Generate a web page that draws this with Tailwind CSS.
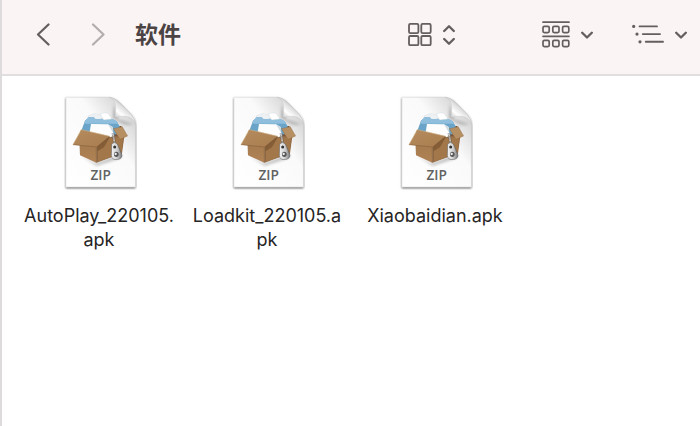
<!DOCTYPE html>
<html lang="zh-CN">
<head>
  <meta charset="UTF-8" />
  <meta name="viewport" content="width=device-width, initial-scale=1.0" />
  <title>软件</title>
  <script src="https://cdn.jsdelivr.net/npm/@tailwindcss/browser@4"></script>
</head>
<body class="bg-white font-['Inter','Noto_Sans_CJK_SC',sans-serif] text-[#262424]">

  <div class="min-h-screen border-l-2 border-[#dddbdc]">

    <header class="flex items-center h-[76px] pb-1 pl-[33px] pr-[13px] bg-[#faf4f4] border-b-2 border-[#e1dedf] text-[#655d5e]">
      <button type="button" aria-label="Back" class="mr-[38px]">
        <svg class="block w-4 h-6" viewBox="0 0 16 24" fill="none" stroke="currentColor" stroke-width="2.2" stroke-linecap="round" stroke-linejoin="round"><path d="M13.5 1.5 L3 11.5 L13.5 21.5" /></svg>
      </button>
      <button type="button" aria-label="Forward" class="mr-[30px] text-[#b3adae]">
        <svg class="block w-4 h-6" viewBox="0 0 16 24" fill="none" stroke="currentColor" stroke-width="2.2" stroke-linecap="round" stroke-linejoin="round"><path d="M4 1.5 L14.5 11.5 L4 21.5" /></svg>
      </button>
      <h1 class="text-[23px] leading-8 font-bold text-[#4b4344]">软件</h1>

      <div class="ml-auto flex items-center">
        <button type="button" aria-label="View as icons" class="flex items-center gap-[11px]">
          <svg class="w-6 h-6" viewBox="0 0 24 24" fill="none" stroke="currentColor" stroke-width="1.8">
            <rect x="1" y="0.9" width="9.4" height="9.2" rx="1.3" />
            <rect x="13.3" y="0.9" width="9.4" height="9.2" rx="1.3" />
            <rect x="1" y="13" width="9.4" height="9.2" rx="1.3" />
            <rect x="13.3" y="13" width="9.4" height="9.2" rx="1.3" />
          </svg>
          <svg class="w-3 h-6" viewBox="0 0 12 24" fill="none" stroke="currentColor" stroke-width="2.3" stroke-linecap="round" stroke-linejoin="round"><path d="M1.2 8 L6 3.2 L10.8 8 M1.2 16 L6 20.8 L10.8 16" /></svg>
        </button>
        <button type="button" aria-label="Group items" class="ml-[87px] flex items-center gap-[11px]">
          <svg class="w-7 h-7" viewBox="0 0 28 28" fill="none" stroke="currentColor" stroke-width="1.7" stroke-linecap="round">
            <path d="M1 1.2 H27 M1 15.3 H27" />
            <rect x="1" y="5.4" width="6.2" height="6.2" rx="1.3" />
            <rect x="10.8" y="5.4" width="6.2" height="6.2" rx="1.3" />
            <rect x="20.6" y="5.4" width="6.2" height="6.2" rx="1.3" />
            <rect x="1" y="19.4" width="6.2" height="6.2" rx="1.3" />
            <rect x="10.8" y="19.4" width="6.2" height="6.2" rx="1.3" />
            <rect x="20.6" y="19.4" width="6.2" height="6.2" rx="1.3" />
          </svg>
          <svg class="w-3 h-3" viewBox="0 0 12 12" fill="none" stroke="currentColor" stroke-width="2.3" stroke-linecap="round" stroke-linejoin="round"><path d="M1.2 3.7 L6 8.5 L10.8 3.7" /></svg>
        </button>
        <button type="button" aria-label="More options" class="ml-[39px] flex items-center gap-[11px]">
          <svg class="w-8 h-6" viewBox="0 0 32 24" fill="none" stroke="currentColor" stroke-width="1.9" stroke-linecap="round">
            <path d="M7.6 3.4 H25 M10.8 11.1 H28 M13.8 18.8 H31" />
            <g fill="currentColor" stroke="none">
              <circle cx="1.7" cy="3.4" r="1.6" />
              <circle cx="5" cy="11.1" r="1.6" />
              <circle cx="8" cy="18.8" r="1.6" />
            </g>
          </svg>
          <svg class="w-3 h-3" viewBox="0 0 12 12" fill="none" stroke="currentColor" stroke-width="2.3" stroke-linecap="round" stroke-linejoin="round"><path d="M1.2 3.7 L6 8.5 L10.8 3.7" /></svg>
        </button>
      </div>
    </header>

    <main class="flex flex-wrap gap-2 pl-[17px] pt-[18px]">
      <figure class="w-40 flex flex-col items-center">
        <svg class="w-[76px] h-[98px]" viewBox="19 28 228 294" role="img" aria-label="ZIP archive"><use href="#zip" /></svg>
        <figcaption class="mt-3 text-center text-[18px] leading-6 whitespace-nowrap">AutoPlay_220105.<br />apk</figcaption>
      </figure>
      <figure class="w-40 flex flex-col items-center">
        <svg class="w-[76px] h-[98px]" viewBox="19 28 228 294" role="img" aria-label="ZIP archive"><use href="#zip" /></svg>
        <figcaption class="mt-3 text-center text-[18px] leading-6 whitespace-nowrap">Loadkit_220105.a<br />pk</figcaption>
      </figure>
      <figure class="w-40 flex flex-col items-center">
        <svg class="w-[76px] h-[98px]" viewBox="19 28 228 294" role="img" aria-label="ZIP archive"><use href="#zip" /></svg>
        <figcaption class="mt-3 text-center text-[18px] leading-6 whitespace-nowrap">Xiaobaidian.apk</figcaption>
      </figure>
    </main>
  </div>

  <!-- shared archive icon -->
  <svg class="absolute w-0 h-0" aria-hidden="true">
    <defs>
      <linearGradient id="paper" x1="0" y1="1" x2="1" y2="0">
        <stop offset="0" stop-color="#ffffff" />
        <stop offset="0.6" stop-color="#fafafa" />
        <stop offset="0.82" stop-color="#dcdcdc" />
        <stop offset="1" stop-color="#bdbdbd" />
      </linearGradient>
      <linearGradient id="curl" x1="0.25" y1="0.8" x2="0.7" y2="0.25">
        <stop offset="0" stop-color="#c4c4c4" />
        <stop offset="0.35" stop-color="#ffffff" />
        <stop offset="0.7" stop-color="#dedede" />
        <stop offset="1" stop-color="#a5a5a5" />
      </linearGradient>
      <linearGradient id="front" x1="0" y1="0" x2="0" y2="1">
        <stop offset="0" stop-color="#a37a4c" />
        <stop offset="1" stop-color="#b08355" />
      </linearGradient>
      <linearGradient id="flap" x1="0" y1="0" x2="1" y2="1">
        <stop offset="0" stop-color="#b58c5e" />
        <stop offset="1" stop-color="#a87d4e" />
      </linearGradient>
      <linearGradient id="metal" x1="0" y1="0" x2="1" y2="0">
        <stop offset="0" stop-color="#f5f5f5" />
        <stop offset="0.55" stop-color="#d0d0d0" />
        <stop offset="1" stop-color="#777777" />
      </linearGradient>
      <filter id="shade" x="-10%" y="-10%" width="120%" height="120%">
        <feDropShadow dx="0" dy="3" stdDeviation="3.5" flood-color="#000" flood-opacity="0.7" />
      </filter>
      <filter id="soft" x="-30%" y="-30%" width="160%" height="160%">
        <feGaussianBlur stdDeviation="4" />
      </filter>
      <g id="zip">
        <path d="M34 38 H164 Q180 39 194 53 L229 89 Q242 103 242 120 V307 H34 Z" fill="url(#paper)" stroke="#c4c4c4" stroke-width="1" filter="url(#shade)" />
        <path d="M178 58 L190 104 L234 118 Q220 124 200 116 L174 100 Z" fill="#666" opacity="0.4" filter="url(#soft)" />
        <path d="M164 38 Q183 43 183 72 Q183 90 179 99 Q194 93 213 95 Q236 98 242 118 Q241 102 229 89 L194 53 Q180 39 164 38 Z" fill="url(#curl)" stroke="#bcbcbc" stroke-width="1" />

        <path d="M76 212 L124 236 L202 207 L198 220 L126 243 Z" fill="#000" opacity="0.25" filter="url(#soft)" />
        <!-- box interior -->
        <path d="M76 140 L100 124 L200 124 L210 156 L125 180 Z" fill="#735335" />
        <!-- blue folder and sheets -->
        <path d="M100 94 L118 87 L160 94 L158 110 L98 108 Z" fill="#edf1f4" stroke="#cdd3d8" stroke-width="1" />
        <path d="M80 138 L91 108 L103 97 L116 97 L123 104 L168 101 L186 110 L195 125 L196 148 L120 154 Z" fill="#6ba4c9" />
        <path d="M91 108 L103 97 L116 97 L123 104 L168 101 L186 110 L190 117 L88 117 Z" fill="#8fbfdc" />
        <path d="M137 88 Q150 82 160 86 L172 103 L147 106 Z" fill="#ffffff" stroke="#c6cbce" stroke-width="1" />
        <path d="M109 118 L160 119 L174 127 L177 160 L104 148 Z" fill="#fdfdfd" />
        <path d="M160 119 L174 127 L176 146 Z" fill="#cfd9e0" />
        <!-- box walls -->
        <path d="M74 168 L125 175 L125 234 L76 212 Z" fill="url(#front)" />
        <path d="M125 176 L170 156 L210 148 L202 206 L125 234 Z" fill="#906740" />
        <path d="M130 186 L166 160 L206 156 L200 206 L130 231 Z" fill="#a27749" />
        <path d="M125 180 V234" stroke="#7b5631" stroke-width="1.5" />
        <!-- open flaps -->
        <path d="M176 132 L203 126 L219 154 L196 164 Z" fill="#b68f62" stroke="#8b6540" stroke-width="1" />
        <path d="M128 184 L166 156 L148 188 L128 200 Z" fill="#79532f" opacity="0.7" />
        <path d="M80 135 L165 155 L126 187 L55 180 Z" fill="url(#flap)" />
        <path d="M55 180 L80 135 L165 155" fill="none" stroke="#cba97d" stroke-width="2" />
        <path d="M55 180 L126 187 L165 155" fill="none" stroke="#7d5936" stroke-width="1.5" />
        <!-- zipper pull -->
        <path d="M175 146 L181 184" stroke="#555" stroke-width="8" stroke-dasharray="3 2" />
        <path d="M175 146 L181 184" stroke="#dadada" stroke-width="5" stroke-dasharray="3 2" />
        <path d="M171 178 Q180 169 188 178 L201 208 Q204 219 194 223 L184 225 Q171 225 170 212 Z" fill="url(#metal)" stroke="#555" stroke-width="1.5" />
        <circle cx="180" cy="187" r="4.5" fill="#333" />
        <ellipse cx="185" cy="209" rx="7" ry="8" fill="#555" />
        <circle cx="183" cy="208" r="3.5" fill="#eeeeee" />

        <text x="138" y="287" text-anchor="middle" font-family="Open Sans, Noto Sans, sans-serif" font-size="41" font-weight="600" fill="#626262">ZIP</text>
      </g>
    </defs>
  </svg>

</body>
</html>
